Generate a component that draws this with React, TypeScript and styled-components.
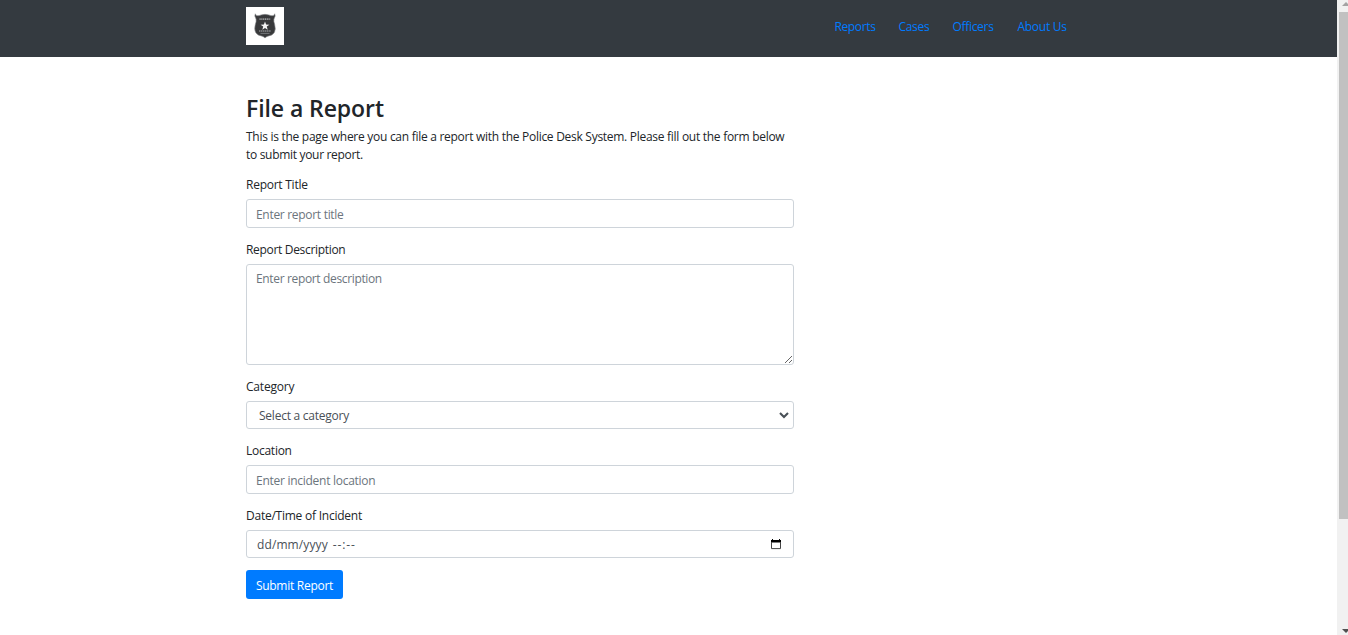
import React from "react";
import styled, { createGlobalStyle } from "styled-components";

const GlobalStyle = createGlobalStyle`
  *, *::before, *::after { box-sizing: border-box; }
  html, body { margin: 0; height: 100%; overflow: hidden; }
  body {
    background: #fff;
    color: #212529;
    font-family: "Segoe UI", "Open Sans", "Noto Sans", sans-serif;
    font-size: 12px;
    line-height: 18px;
  }
`;

const Window = styled.div`
  display: flex;
  height: 635px;
`;

const Page = styled.div`
  flex: 1;
  min-width: 0;
`;

const Navbar = styled.header`
  display: flex;
  justify-content: center;
  height: 57px;
  background: #343a40;
`;

const NavInner = styled.div`
  display: flex;
  justify-content: space-between;
  width: 845px;
  padding: 7px 0 0;
`;

const Brand = styled.a`
  display: block;
  width: 38px;
  height: 38px;
  background: #fff;
`;

const NavLinks = styled.nav`
  display: flex;
  gap: 24px;
  padding: 11px 23.6px 0 0;
`;

const Spaced = styled.span<{ $track?: number }>`
  letter-spacing: ${(p) => p.$track ?? 0}px;
  white-space: nowrap;
`;

const NavLink = styled.a<{ $width: number; $track?: number }>`
  width: ${(p) => p.$width}px;
  color: #007bff;
  letter-spacing: ${(p) => p.$track ?? 0}px;
  white-space: nowrap;
  text-decoration: none;
`;

const Main = styled.main`
  width: 845px;
  margin: 0 auto;
  padding-top: 36px;
`;

const Form = styled.form`
  width: 548px;
`;

const Title = styled.h2`
  height: 29px;
  margin: 0 0 6px;
  font-size: 23px;
  font-weight: 600;
  line-height: 30px;
  letter-spacing: -0.08px;
`;

const Intro = styled.p`
  margin: 0 0 12px;
`;

const Group = styled.div`
  display: flex;
  flex-direction: column;
  margin-bottom: 13px;

  &:last-of-type { margin-bottom: 12px; }
`;

const Label = styled.label<{ $track?: number }>`
  margin-bottom: 5px;
  letter-spacing: ${(p) => p.$track ?? 0}px;
`;

const control = `
  display: block;
  width: 100%;
  margin: 0;
  border: 1px solid #ced4da;
  border-radius: 3px;
  background: #fff;
  color: #495057;
  font: inherit;
  outline: none;
  &::placeholder { color: #6c757d; opacity: 1; }
`;

const Input = styled.input<{ $track?: number }>`
  ${control}
  height: 29px;
  padding: 5px 9px 4px;
  letter-spacing: ${(p) => p.$track ?? 0}px;
`;

const TextArea = styled.textarea<{ $track?: number }>`
  ${control}
  height: 101px;
  padding: 5px 9px;
  resize: vertical;
  letter-spacing: ${(p) => p.$track ?? 0}px;
`;

const SelectBox = styled.div`
  position: relative;

  svg {
    position: absolute;
    top: 10px;
    right: 5px;
    pointer-events: none;
  }
`;

const Select = styled.select<{ $track?: number }>`
  ${control}
  appearance: none;
  height: 28px;
  padding: 5px 24px 3px 12px;
  letter-spacing: ${(p) => p.$track ?? 0}px;
`;

const DateField = styled.div`
  ${control}
  display: flex;
  align-items: center;
  gap: 5px;
  height: 28px;
  padding: 1px 12px 0 10px;

  svg { margin-left: auto; }
`;

const Submit = styled.button<{ $track?: number }>`
  width: 97px;
  height: 29px;
  padding: 2px 0 0;
  border: 0;
  border-radius: 3px;
  background: #007bff;
  color: #fff;
  font: inherit;
  letter-spacing: ${(p) => p.$track ?? 0}px;
`;

const Scrollbar = styled.div`
  display: flex;
  flex-direction: column;
  justify-content: space-between;
  width: 11px;
  background: #f1f1f1;
`;

const Thumb = styled.div`
  width: 9px;
  height: 507px;
  margin: 0 0 auto 2px;
  background: #c1c1c1;
`;

const Badge = () => (
  <svg width="38" height="38" viewBox="0 0 38 38" aria-hidden="true">
    <path
      d="M9.3 6.8 L10.3 8.6 Q13 9 15.2 7.9 Q19 6.8 22.8 7.9 Q25 9 27.7 8.6 L28.7 6.8 L29.2 9 L27.9 12.2 Q27.6 14.5 28.6 17 Q30 22 28.5 25.3 Q26.5 28.6 21.8 29.2 Q20 29.8 19 31 Q18 29.8 16.2 29.2 Q11.5 28.6 9.5 25.3 Q8 22 9.4 17 Q10.4 14.5 10.1 12.2 L8.8 9 Z"
      fill="#38393b"
      stroke="#8a8c8e"
      strokeWidth="0.6"
    />
    <path d="M13.5 12.2 H24.5" stroke="#97999b" strokeWidth="1.8" strokeDasharray="1.2 0.6" />
    <path d="M19 14.4 L20.1 17.6 L23.4 17.7 L20.8 19.6 L21.7 22.8 L19 20.9 L16.3 22.8 L17.2 19.6 L14.6 17.7 L17.9 17.6 Z" fill="#f4f4f4" />
    <path d="M13 24 H25" stroke="#85878a" strokeWidth="1.3" strokeDasharray="1.4 0.5" />
    <path d="M14.5 26.4 H23.5" stroke="#74777a" strokeWidth="1" />
  </svg>
);

const Chevron = () => (
  <svg width="10" height="8" viewBox="0 0 10 8" aria-hidden="true">
    <path d="M1 2L5 6L9 2" fill="none" stroke="#495057" strokeWidth="2.1" />
  </svg>
);

const CalendarIcon = () => (
  <svg width="10" height="11" viewBox="0 0 10 11" aria-hidden="true">
    <path d="M0 1h10v2.6H0zM1 0h1v1H1zM8 0h1v1H8z" fill="#000" />
    <path d="M.5 3v6.6h9V3" fill="none" stroke="#444" />
  </svg>
);

const ArrowUp = () => (
  <svg width="11" height="12" viewBox="0 0 11 12" aria-hidden="true">
    <path d="M5 6L9 2L13 6Z" fill="#a3a3a3" />
  </svg>
);

const ArrowDown = () => (
  <svg width="11" height="12" viewBox="0 0 11 12" aria-hidden="true">
    <path d="M5 6L9 10L13 6Z" fill="#505050" />
  </svg>
);

export default function App() {
  return (
    <Window>
      <GlobalStyle />
      <Page>
        <Navbar>
          <NavInner>
            <Brand href="#"><Badge /></Brand>
            <NavLinks>
              <NavLink href="#" $width={40} $track={-0.35}>Reports</NavLink>
              <NavLink href="#" $width={30} $track={-0.3}>Cases</NavLink>
              <NavLink href="#" $width={41} $track={-0.3}>Officers</NavLink>
              <NavLink href="#" $width={50} $track={-0.25}>About Us</NavLink>
            </NavLinks>
          </NavInner>
        </Navbar>
        <Main>
          <Form onSubmit={(e) => e.preventDefault()}>
            <Title>File a Report</Title>
            <Intro>
              <Spaced $track={-0.28}>This is the page where you can file a report with the Police Desk System. Please fill out the form below</Spaced>
              <br />
              <Spaced $track={-0.31}>to submit your report.</Spaced>
            </Intro>
            <Group>
              <Label htmlFor="title" $track={-0.25}>Report Title</Label>
              <Input id="title" placeholder="Enter report title" $track={-0.3} />
            </Group>
            <Group>
              <Label htmlFor="description" $track={-0.32}>Report Description</Label>
              <TextArea id="description" placeholder="Enter report description" $track={-0.35} />
            </Group>
            <Group>
              <Label htmlFor="category" $track={-0.2}>Category</Label>
              <SelectBox>
                <Select id="category" defaultValue="" $track={-0.24}>
                  <option value="">Select a category</option>
                </Select>
                <Chevron />
              </SelectBox>
            </Group>
            <Group>
              <Label htmlFor="location" $track={-0.26}>Location</Label>
              <Input id="location" placeholder="Enter incident location" $track={-0.27} />
            </Group>
            <Group>
              <Label $track={-0.24}>Date/Time of Incident</Label>
              <DateField>
                <Spaced $track={0.1}>dd/mm/yyyy</Spaced>
                <Spaced $track={0.85}>--:--</Spaced>
                <CalendarIcon />
              </DateField>
            </Group>
            <Submit type="submit" $track={-0.27}>Submit Report</Submit>
          </Form>
        </Main>
      </Page>
      <Scrollbar>
        <ArrowUp />
        <Thumb />
        <ArrowDown />
      </Scrollbar>
    </Window>
  );
}
